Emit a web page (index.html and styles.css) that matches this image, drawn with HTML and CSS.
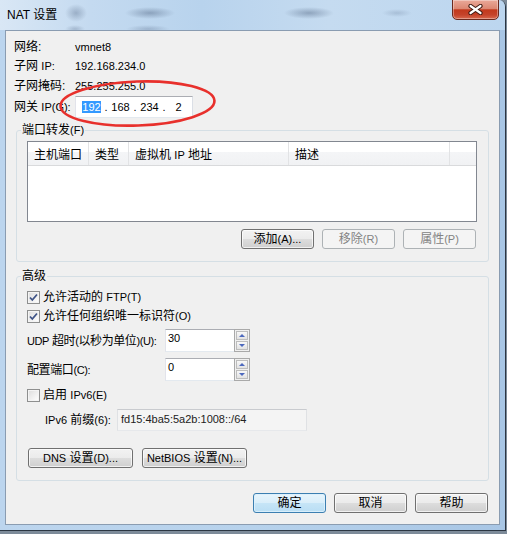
FILE: index.html
```html
<!DOCTYPE html>
<html lang="zh-CN">
<head>
<meta charset="utf-8">
<title>NAT 设置</title>
<link rel="stylesheet" href="styles.css">
</head>
<body>
<div class="window">
  <header class="titlebar">
    <span class="title">NAT 设置</span>
    <button class="close" type="button" aria-label="关闭">
      <svg width="15" height="11" viewBox="0 0 15 11"><path d="M2.5 2 L12.5 9 M12.5 2 L2.5 9" stroke="#3d1a12" stroke-width="4.2" stroke-linecap="round" fill="none"/><path d="M2.5 2 L12.5 9 M12.5 2 L2.5 9" stroke="#ffffff" stroke-width="2.2" stroke-linecap="round" fill="none"/></svg>
    </button>
  </header>
  <main class="client">
    <div class="info">
      <span>网络:</span><span class="lat">vmnet8</span>
      <span>子网 <span class="lat">IP:</span></span><span class="lat">192.168.234.0</span>
      <span>子网掩码:</span><span class="lat">255.255.255.0</span>
      <span>网关 <span class="lat">IP(G):</span></span>
      <div class="ipbox">
        <span class="oct"><span class="sel">192</span></span><span class="dot">.</span><span class="oct">168</span><span class="dot">.</span><span class="oct">234</span><span class="dot">.</span><span class="oct">2</span>
      </div>
    </div>

    <fieldset class="group g1">
      <legend>端口转发<span class="lat">(F)</span></legend>
      <div class="lv">
        <div class="lv-head">
          <span class="c1">主机端口</span><span class="c2">类型</span><span class="c3">虚拟机 <span class="lat">IP</span> 地址</span><span class="c4">描述</span><span class="c5"></span>
        </div>
      </div>
      <div class="btnrow">
        <button class="btn w73" type="button">添加<span class="lat">(A)...</span></button>
        <button class="btn w73" type="button" disabled>移除<span class="lat">(R)</span></button>
        <button class="btn w73" type="button" disabled>属性<span class="lat">(P)</span></button>
      </div>
    </fieldset>

    <fieldset class="group g2">
      <legend>高级</legend>
      <div class="chk r1"><span class="box"><svg width="13" height="13" viewBox="0 0 13 13"><path d="M3 6.5 L5.3 9 L10 3.5" stroke="#3f5487" stroke-width="1.8" fill="none"/></svg></span><span>允许活动的 <span class="lat">FTP(T)</span></span></div>
      <div class="chk r2"><span class="box"><svg width="13" height="13" viewBox="0 0 13 13"><path d="M3 6.5 L5.3 9 L10 3.5" stroke="#3f5487" stroke-width="1.8" fill="none"/></svg></span><span>允许任何组织唯一标识符<span class="lat">(O)</span></span></div>
      <div class="frow udp">
        <span class="flabel"><span class="lat">UDP</span> 超时<span class="lat">(</span>以秒为单位<span class="lat">)(U):</span></span>
        <div class="spin"><span class="spin-val">30</span><span class="spin-btns"><span class="sb up"></span><span class="sb down"></span></span></div>
      </div>
      <div class="frow cfg">
        <span class="flabel">配置端口<span class="lat">(C):</span></span>
        <div class="spin"><span class="spin-val">0</span><span class="spin-btns"><span class="sb up"></span><span class="sb down"></span></span></div>
      </div>
      <div class="chk r3"><span class="box"></span><span>启用 <span class="lat">IPv6(E)</span></span></div>
      <div class="frow v6">
        <span class="v6label"><span class="lat">IPv6</span> 前缀<span class="lat">(6):</span></span>
        <div class="ro">fd15:4ba5:5a2b:1008::/64</div>
      </div>
      <div class="btnrow2">
        <button class="btn w105" type="button"><span class="lat">DNS</span> 设置<span class="lat">(D)...</span></button>
        <button class="btn w105" type="button"><span class="lat">NetBIOS</span> 设置<span class="lat">(N)...</span></button>
      </div>
    </fieldset>

    <div class="footer">
      <button class="btn w73 default" type="button">确定</button>
      <button class="btn w73" type="button">取消</button>
      <button class="btn w73" type="button">帮助</button>
    </div>
  </main>
</div>
<svg class="annot" width="507" height="534" viewBox="0 0 507 534" aria-hidden="true"><ellipse cx="137.5" cy="103.5" rx="77" ry="22" transform="rotate(-2 137.5 103.5)" fill="none" stroke="#e8302c" stroke-width="2.6"/></svg>
</body>
</html>
```

FILE: styles.css
```css
* { box-sizing: border-box; }
html, body { margin: 0; padding: 0; }
body {
  position: relative;
  width: 507px;
  height: 534px;
  overflow: hidden;
  background: #7d8b99;
  font-family: "Liberation Sans", "Noto Sans CJK SC", sans-serif;
  font-size: 12px;
  color: #000;
}

.window {
  width: 506px;
  height: 531px;
  border-right: 1px solid #2c3642;
  border-bottom: 1px solid #2c3642;
  border-top-right-radius: 7px;
  background: linear-gradient(90deg, #bcd5ee 0%, #b7d2ec 50%, #a8c6e5 100%);
  display: flex;
  flex-direction: column;
  overflow: hidden;
}

.titlebar {
  height: 30px;
  flex: none;
  display: flex;
  align-items: flex-start;
  padding-left: 7px;
  background:
    radial-gradient(ellipse 11px 9px at 76px 13px, rgba(70,90,120,.35), rgba(70,90,120,0)),
    radial-gradient(ellipse 25px 6px at 150px 13px, rgba(70,90,120,.42), rgba(70,90,120,0)),
    radial-gradient(ellipse 25px 6px at 309px 13px, rgba(70,90,120,.42), rgba(70,90,120,0)),
    radial-gradient(ellipse 15px 4px at 397px 13px, rgba(90,110,140,.25), rgba(90,110,140,0)),
    radial-gradient(ellipse 10px 4px at 75px 29px, rgba(80,100,130,.3), rgba(80,100,130,0)),
    radial-gradient(ellipse 22px 4px at 148px 29px, rgba(80,100,130,.3), rgba(80,100,130,0)),
    linear-gradient(90deg, #d9e7f5 0%, #c4daf0 18%, #b8d3ed 40%, #c5dbf0 65%, #bcd6ef 100%);
}
.title {
  font-size: 12px;
  line-height: 28px;
  padding-top: 1px;
  color: #000;
}
.close {
  margin: -1px 6px 0 auto;
  width: 47px;
  height: 21px;
  padding: 0;
  border: 1px solid #6b2a1f;
  border-radius: 0 0 5px 5px;
  background: linear-gradient(#eaa999 0%, #dc8873 45%, #c2391d 52%, #c5432a 78%, #d8694e 100%);
  box-shadow: inset 0 0 0 1px rgba(255,255,255,.35);
  display: flex;
  align-items: center;
  justify-content: center;
}

.client {
  margin-left: 5px;
  width: 495px;
  height: 495px;
  flex: none;
  border: 1px solid #8a9cb1;
  background: #f0f0f0;
  display: flex;
  flex-direction: column;
}

.info {
  display: grid;
  grid-template-columns: 61px auto;
  grid-template-rows: 19px 20px 20px 22px;
  align-items: center;
  justify-items: start;
  padding: 6px 0 0 8px;
  line-height: 16px;
}
.lat { font-size: 11px; }
.ipbox {
  width: 118px;
  height: 22px;
  display: flex;
  align-items: center;
  padding-left: 3px;
  border: 1px solid;
  border-color: #abadb3 #dbdfe6 #e3e9ef #e2e3ea;
  background: #fff;
  font-size: 11px;
}
.oct { width: 25px; text-align: center; line-height: 14px; }
.dot { width: 4px; text-align: center; line-height: 14px; }
.sel {
  display: inline-block;
  background: #3399ff;
  color: #fff;
  line-height: 12px;
}

.group {
  margin: 0 10px;
  min-width: 0;
  border: 1px solid #d5dfe5;
  border-radius: 3px;
  padding: 0 11px 12px 10px;
}
.group legend {
  margin-left: -6px;
  padding: 0 1px;
  height: 16px;
  line-height: 16px;
}
.g1 { margin-top: 4px; padding-top: 3px; }
.g2 { margin-top: 6px; padding-top: 4px; }

.lv {
  width: 450px;
  height: 81px;
  border: 1px solid #828790;
  background: #fff;
}
.lv-head {
  display: flex;
  height: 24px;
  border-bottom: 1px solid #d9dadc;
  background: linear-gradient(#ffffff 0%, #ffffff 42%, #f4f5f7 43%, #f1f2f4 100%);
}
.lv-head > span {
  padding: 5px 0 0 6px;
  line-height: 16px;
  border-right: 1px solid #e2e3e5;
  white-space: nowrap;
}
.lv-head .c1 { width: 61px; }
.lv-head .c2 { width: 40px; }
.lv-head .c3 { width: 160px; }
.lv-head .c4 { width: 161px; }
.lv-head .c5 { flex: 1; border-right: none; }

.btnrow {
  margin-top: 7px;
  display: flex;
  justify-content: flex-end;
  gap: 8px;
  padding-right: 1px;
}

.btn {
  height: 20px;
  padding: 0;
  font: inherit;
  font-size: 12px;
  line-height: 18px;
  color: #000;
  border: 1px solid #707070;
  border-radius: 3px;
  background: linear-gradient(#f2f2f2 0%, #ebebeb 50%, #dddddd 51%, #cfcfcf 100%);
  box-shadow: inset 0 0 0 1px rgba(255,255,255,.7);
  white-space: nowrap;
}
.btn:disabled {
  border-color: #adb2b5;
  background: #f4f4f4;
  color: #838383;
  box-shadow: none;
}
.btn.default {
  border-color: #3c7fb1;
  background: linear-gradient(#e8f5fc 0%, #d9eefa 50%, #c6e5f7 51%, #b9def4 100%);
  box-shadow: inset 0 0 0 1px rgba(220,240,252,.9);
}
.w73 { width: 73px; }
.w105 { width: 105px; }

.chk {
  display: flex;
  align-items: center;
  gap: 3px;
  height: 18px;
  line-height: 16px;
}
.chk.r2 { margin-top: 1px; }
.chk.r3 { margin-top: 5px; }
.box {
  width: 13px;
  height: 13px;
  flex: none;
  border: 1px solid #8e8f8f;
  background: linear-gradient(135deg, #dcdcdc 0%, #f2f2f2 60%, #ffffff 100%);
  box-shadow: inset 0 0 0 1px #f4f4f4;
}
.box svg { display: block; margin: -1px; }

.frow {
  display: flex;
  align-items: center;
  line-height: 16px;
}
.udp { margin-top: 4px; }
.cfg { margin-top: 6px; }
.v6 { margin-top: 5px; }
.flabel {
  width: 138px;
  flex: none;
  white-space: nowrap;
  letter-spacing: -0.4px;
}
.spin {
  display: flex;
  width: 85px;
  height: 23px;
  border: 1px solid;
  border-color: #abadb3 #dbdfe6 #e3e9ef #e2e3ea;
  background: #fff;
}
.spin-val {
  flex: 1;
  padding: 0 0 0 2px;
  line-height: 16px;
  font-size: 11px;
}
.spin-btns {
  width: 16px;
  margin: -1px -1px -1px 0;
  border: 1px solid #a9a9a9;
  padding: 1px;
  display: flex;
  flex-direction: column;
  gap: 1px;
  background: #f0f0f0;
}
.sb {
  flex: 1;
  border: 1px solid #bdbdbd;
  background: linear-gradient(#f8f8f8, #e2e2e2);
  display: flex;
  align-items: center;
  justify-content: center;
}
.sb::after {
  content: "";
  width: 0;
  height: 0;
  border-left: 3px solid transparent;
  border-right: 3px solid transparent;
}
.up::after { border-bottom: 3px solid #4c68bd; }
.down::after { border-top: 3px solid #4c68bd; }

.v6label { width: 90px; padding-left: 18px; flex: none; white-space: nowrap; }
.ro {
  width: 190px;
  height: 22px;
  border: 1px solid;
  border-color: #c9cbcf #dfe1e4 #e6e8eb #dfe1e4;
  background: #f4f4f4;
  padding-left: 3px;
  line-height: 19px;
  font-size: 11px;
  color: #222;
}

.btnrow2 {
  margin-top: 17px;
  margin-left: 1px;
  display: flex;
  gap: 9px;
}

.footer {
  margin-top: 12px;
  display: flex;
  justify-content: flex-end;
  gap: 8px;
  padding-right: 11px;
}

.annot {
  position: absolute;
  left: 0;
  top: 0;
  pointer-events: none;
}
```
